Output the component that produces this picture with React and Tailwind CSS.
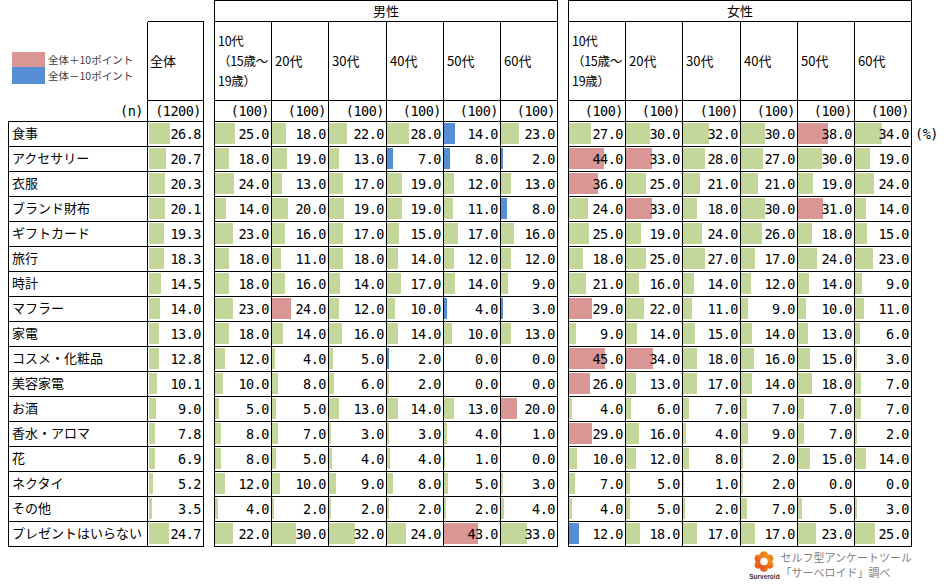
import React from "react";
import clsx from "clsx";

const rows = [
  ["食事", 26.8, [25, 18, 22, 28, 14, 23], [27, 30, 32, 30, 38, 34]],
  ["アクセサリー", 20.7, [18, 19, 13, 7, 8, 2], [44, 33, 28, 27, 30, 19]],
  ["衣服", 20.3, [24, 13, 17, 19, 12, 13], [36, 25, 21, 21, 19, 24]],
  ["ブランド財布", 20.1, [14, 20, 19, 19, 11, 8], [24, 33, 18, 30, 31, 14]],
  ["ギフトカード", 19.3, [23, 16, 17, 15, 17, 16], [25, 19, 24, 26, 18, 15]],
  ["旅行", 18.3, [18, 11, 18, 14, 12, 12], [18, 25, 27, 17, 24, 23]],
  ["時計", 14.5, [18, 16, 14, 17, 14, 9], [21, 16, 14, 12, 14, 9]],
  ["マフラー", 14.0, [23, 24, 12, 10, 4, 3], [29, 22, 11, 9, 10, 11]],
  ["家電", 13.0, [18, 14, 16, 14, 10, 13], [9, 14, 15, 14, 13, 6]],
  ["コスメ・化粧品", 12.8, [12, 4, 5, 2, 0, 0], [45, 34, 18, 16, 15, 3]],
  ["美容家電", 10.1, [10, 8, 6, 2, 0, 0], [26, 13, 17, 14, 18, 7]],
  ["お酒", 9.0, [5, 5, 13, 14, 13, 20], [4, 6, 7, 7, 7, 7]],
  ["香水・アロマ", 7.8, [8, 7, 3, 3, 4, 1], [29, 16, 4, 9, 7, 2]],
  ["花", 6.9, [8, 5, 4, 4, 1, 0], [10, 12, 8, 2, 15, 14]],
  ["ネクタイ", 5.2, [12, 10, 9, 8, 5, 3], [7, 5, 1, 2, 0, 0]],
  ["その他", 3.5, [4, 2, 2, 2, 2, 4], [4, 5, 2, 7, 5, 3]],
  ["プレゼントはいらない", 24.7, [22, 30, 32, 24, 43, 33], [12, 18, 17, 17, 23, 25]],
];

const ages = ["20代", "30代", "40代", "50代", "60代"];

const jp = "font-['Noto_Sans_CJK_JP',sans-serif]";
const num = "font-['DejaVu_Sans_Mono',monospace] text-[13.5px] tracking-[-0.5px]";

function ValCell({ v, total, isTotal, last }) {
  const diff = v - total;
  let color = "bg-[#c4d79b]";
  if (!isTotal && diff >= 9.95) color = "bg-[#da9694]";
  if (!isTotal && diff <= -9.95) color = "bg-[#558ed5]";
  return (
    <div
      className={clsx(
        "relative h-[25px] border-b border-black flex items-center justify-end pr-[2px]",
        isTotal ? "border-r" : "border-l",
        last && "border-r"
      )}
    >
      <div
        className={clsx("absolute top-[1px] h-[21px]", isTotal ? "left-[1px]" : "left-0", color)}
        style={{ width: v * 0.8 }}
      />
      <span className={clsx("relative text-black", num)}>{v.toFixed(1)}</span>
    </div>
  );
}

function AgeHeaders() {
  return (
    <>
      <div className={clsx("h-[79px] border-l border-b border-black flex items-center pl-[3px] text-[12.5px] tracking-[-0.3px] leading-[20px] whitespace-nowrap", jp)}>
        <div>
          10代
          <br />
          （15歳～
          <br />
          19歳）
        </div>
      </div>
      {ages.map((a, i) => (
        <div
          key={a}
          className={clsx(
            "h-[79px] border-l border-b border-black flex items-center pl-[3px] text-[13px]",
            jp,
            i === ages.length - 1 && "border-r"
          )}
        >
          {a}
        </div>
      ))}
    </>
  );
}

function NCells() {
  return [0, 1, 2, 3, 4, 5].map((i) => (
    <div
      key={i}
      className={clsx(
        "h-[21px] border-l border-b border-black flex items-center justify-end pr-[2px]",
        num,
        i === 5 && "border-r"
      )}
    >
      (100)
    </div>
  ));
}

function Logo() {
  const pts = [0, 60, 120, 180, 240, 300].map((a) => {
    const r = ((a - 90) * Math.PI) / 180;
    return [12 + 6.3 * Math.cos(r), 10.5 + 6.3 * Math.sin(r)];
  });
  return (
    <svg width="24" height="21" viewBox="0 0 24 21">
      <defs>
        <linearGradient id="sgrad" x1="0" y1="1" x2="1" y2="0">
          <stop offset="0" stopColor="#e2401c" />
          <stop offset="1" stopColor="#f7a51d" />
        </linearGradient>
      </defs>
      <g fill="url(#sgrad)">
        {pts.map(([x, y], i) => (
          <circle key={i} cx={x} cy={y} r="3.9" />
        ))}
        <circle cx="12" cy="10.5" r="7" />
      </g>
      <circle cx="12" cy="10.5" r="3.8" fill="#fff" />
    </svg>
  );
}

export default function App() {
  return (
    <div className="w-[947px] h-[587px] bg-white overflow-hidden">
      <div className="ml-[8px] grid grid-cols-[140px_56px_10px_57px_57px_58px_57px_57px_58px_10px_57px_57px_58px_57px_57px_58px_34px] text-black">
        {/* Row A */}
        <div className="h-[22px]" />
        <div className="h-[22px] border-b border-black" />
        <div />
        <div className={clsx("col-span-6 h-[22px] border border-black flex items-center justify-center text-[13px]", jp)}>
          男性
        </div>
        <div />
        <div className={clsx("col-span-6 h-[22px] border border-black flex items-center justify-center text-[13px]", jp)}>
          女性
        </div>
        <div />

        {/* Row B */}
        <div className="h-[79px] border-r border-black pt-[30px] pl-[4px]">
          <div className="flex items-center">
            <div className="w-[33px] h-[15px] bg-[#da9694]" />
            <span className={clsx("ml-[3px] text-[10.5px] leading-[15px] text-[#404040]", jp)}>全体＋10ポイント</span>
          </div>
          <div className="flex items-center">
            <div className="w-[33px] h-[17px] bg-[#558ed5]" />
            <span className={clsx("ml-[3px] text-[10.5px] leading-[15px] text-[#404040]", jp)}>全体－10ポイント</span>
          </div>
        </div>
        <div className={clsx("h-[79px] border-r border-b border-black flex items-center pl-[2px] text-[13px]", jp)}>全体</div>
        <div />
        <AgeHeaders />
        <div />
        <AgeHeaders />
        <div />

        {/* Row C */}
        <div className={clsx("h-[21px] border-r border-b border-black flex items-center justify-end pr-[4px]", num)}>(n)</div>
        <div className={clsx("h-[21px] border-r border-b border-black flex items-center justify-end pr-[2px]", num)}>(1200)</div>
        <div />
        <NCells />
        <div />
        <NCells />
        <div />

        {/* Data */}
        {rows.map(([label, total, male, female], ri) => (
          <React.Fragment key={label}>
            <div className={clsx("h-[25px] border-l border-r border-b border-black flex items-center pl-[3px] pb-[3px] text-[13px] whitespace-nowrap", jp)}>
              {label}
            </div>
            <ValCell v={total} total={total} isTotal />
            <div />
            {male.map((v, i) => (
              <ValCell key={"m" + i} v={v} total={total} last={i === 5} />
            ))}
            <div />
            {female.map((v, i) => (
              <ValCell key={"f" + i} v={v} total={total} last={i === 5} />
            ))}
            <div className={clsx("h-[25px] flex items-center pl-[3px]", num)}>{ri === 0 ? "(%)" : ""}</div>
          </React.Fragment>
        ))}
      </div>

      <div className="w-[912px] mt-[3px] flex justify-end">
        <div className="flex items-start">
          <div className="flex flex-col items-center w-[30px] mt-[1px]">
            <Logo />
            <span className="font-['Liberation_Sans',sans-serif] text-[6.5px] font-bold leading-[8px] text-[#333] mt-[1px]">Surveroid</span>
          </div>
          <div className={clsx("text-[11px] leading-[15px] text-[#808080] ml-[1px]", jp)}>
            <div>セルフ型アンケートツール</div>
            <div>「サーベロイド」調べ</div>
          </div>
        </div>
      </div>
    </div>
  );
}
